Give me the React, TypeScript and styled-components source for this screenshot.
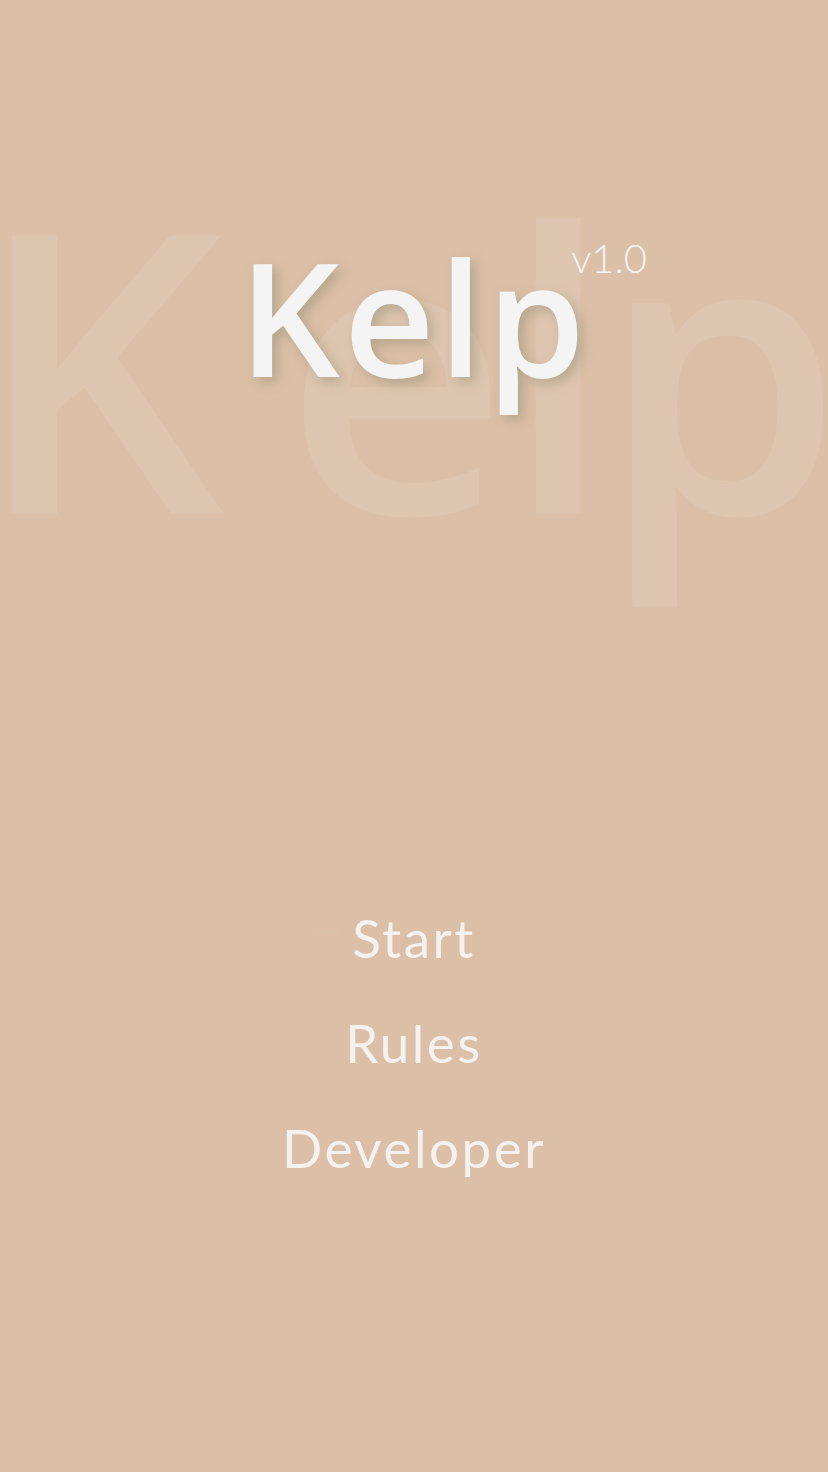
import React from 'react';
import styled, {createGlobalStyle} from "styled-components";

const GlobalStyle = createGlobalStyle`
  html, body {
    margin: 0;
    padding: 0;
    background-color: #dbbfa6;
  }
`

const Screen = styled.div`
  position: relative;
  min-height: 100vh;
  background-color: #dbbfa6;
  overflow: hidden;
  display: flex;
  flex-flow: column;
  align-items: center;
  user-select: none;
`

// the huge faded word behind the title
const Backdrop = styled.div`
  position: absolute;
  left: -25px;
  top: 168px;
  font-family: "Open Sans", sans-serif;
  font-size: 390px;
  font-weight: 600;
  line-height: 1;
  color: rgba(255, 255, 255, 0.1);
  white-space: nowrap;
  pointer-events: none;
`

const Glyph = styled.span<{ $spacing: number }>`
  letter-spacing: ${p => p.$spacing}px;
`

const Hero = styled.header`
  position: relative;
  padding-top: 237px;
`

const Title = styled.h1`
  position: relative;
  margin: 0;
  font-family: "Open Sans", sans-serif;
  font-size: 158px;
  font-weight: 550;
  line-height: 1;
  letter-spacing: 4px;
  color: #f4f4f4;
  text-shadow: 5px 5px 12px rgba(120, 125, 100, 0.38);
`

const Version = styled.sup`
  position: absolute;
  left: 100%;
  top: 1px;
  margin-left: -18px;
  font-family: Lato, sans-serif;
  font-size: 40px;
  font-weight: 300;
  line-height: 1;
  letter-spacing: 0;
  color: #f4f4f4;
  text-shadow: none;
`

const Menu = styled.nav`
  margin-top: 490px;
  display: flex;
  flex-flow: column;
  align-items: center;
`

const MenuItem = styled.div<{ $active?: boolean }>`
  position: relative;
  font-family: Lato, sans-serif;
  font-size: 53px;
  line-height: 105px;
  letter-spacing: 2.5px;
  color: #f4f1ee;
  cursor: pointer;

  &::before {
    content: '';
    display: ${p => p.$active ? 'block' : 'none'};
    position: absolute;
    left: -40px;
    top: 45px;
    width: 22px;
    height: 26px;
    border-top: 4px solid rgba(255, 255, 255, 0.04);
    border-right: 4px solid rgba(255, 255, 255, 0.04);
  }
`

const items = ['Start', 'Rules', 'Developer']

function App() {
    return (
        <Screen>
            <GlobalStyle/>
            <Backdrop>
                <Glyph $spacing={60}>K</Glyph>
                <Glyph $spacing={-5}>e</Glyph>
                <Glyph $spacing={-12}>l</Glyph>
                <Glyph $spacing={0}>p</Glyph>
            </Backdrop>
            <Hero>
                <Title>
                    Kelp
                    <Version>v1.0</Version>
                </Title>
            </Hero>
            <Menu>
                {items.map((item, i) => (
                    <MenuItem key={item} $active={i === 0}>{item}</MenuItem>
                ))}
            </Menu>
        </Screen>
    );
}

export default App;
